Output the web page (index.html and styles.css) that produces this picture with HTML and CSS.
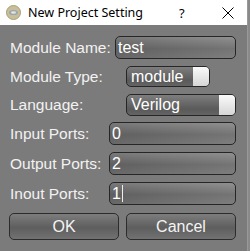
FILE: index.html
```html
<!DOCTYPE html>
<html lang="en">
<head>
  <meta charset="UTF-8">
  <title>New Project Setting</title>
  <link rel="stylesheet" href="styles.css">
</head>
<body>
  <div class="window">
    <div class="titlebar">
      <svg class="app-icon" width="15" height="15" viewBox="0 0 15 15">
        <circle cx="7.5" cy="7.5" r="7" fill="#c8bf98" stroke="#a89f78" stroke-width="1"/>
        <ellipse cx="7.5" cy="7.5" rx="4.5" ry="2.6" fill="#9aa6b8"/>
        <ellipse cx="7.5" cy="7.5" rx="2.5" ry="1.2" fill="#e8e4d6"/>
      </svg>
      <span class="title">New Project Setting</span>
      <span class="help">?</span>
      <svg class="close" width="12" height="12" viewBox="0 0 12 12">
        <path d="M0.5 0.5 L11.5 11.5 M11.5 0.5 L0.5 11.5" stroke="#000" stroke-width="1"/>
      </svg>
    </div>

    <div class="form">
      <div class="row row-name">
        <label>Module Name:</label>
        <div class="edit edit-name">test</div>
      </div>
      <div class="row row-type">
        <label>Module Type:</label>
        <div class="combo combo-type"><span>module</span><i></i></div>
      </div>
      <div class="row row-lang">
        <label>Language:</label>
        <div class="combo combo-lang"><span>Verilog</span><i></i></div>
      </div>
      <div class="row">
        <label>Input Ports:</label>
        <div class="edit edit-port">0</div>
      </div>
      <div class="row">
        <label>Output Ports:</label>
        <div class="edit edit-port">2</div>
      </div>
      <div class="row">
        <label>Inout Ports:</label>
        <div class="edit edit-port">1<b class="caret"></b></div>
      </div>
      <div class="buttons">
        <button>OK</button>
        <button>Cancel</button>
      </div>
    </div>
  </div>
</body>
</html>
```

FILE: styles.css
```css
* {
  margin: 0;
  padding: 0;
  box-sizing: border-box;
}

body {
  width: 250px;
  height: 251px;
  overflow: hidden;
  background: #8a8a8a;
  font-family: "Liberation Sans", Arial, sans-serif;
  font-size: 15.5px;
}

.window {
  width: 248px;
  height: 251px;
  background: #7b7b7b;
  border-right: 1px solid #999;
}

.titlebar {
  height: 25px;
  background: #fff;
  display: flex;
  align-items: center;
  padding-left: 6px;
  font-family: "Noto Sans", sans-serif;
  font-size: 12.5px;
  color: #000;
}

.app-icon {
  flex-shrink: 0;
}

.title {
  width: 151px;
  margin-left: 7px;
}

.help {
  width: 43px;
  font-size: 13px;
}

.close {
  flex-shrink: 0;
}

.form {
  padding: 11px 11px 0 10px;
  display: flex;
  flex-direction: column;
  gap: 7px;
  color: #f2f2f2;
}

.row {
  display: flex;
  align-items: center;
  justify-content: space-between;
  height: 23px;
}

.row-type {
  height: 21px;
}

.row-lang {
  height: 22px;
  margin-bottom: -1px;
}

.edit {
  height: 23px;
  border: 1px solid #262626;
  border-radius: 5px;
  padding-left: 2px;
  line-height: 21px;
  font-size: 16px;
  color: #fff;
  background: linear-gradient(100deg, rgba(0,0,0,0.12), rgba(255,255,255,0.06)),
              linear-gradient(to bottom, #8a8a8a, #6c6c6c 55%, #767676);
}

.edit-name {
  width: 121px;
}

.edit-port {
  width: 127px;
}

.caret {
  display: inline-block;
  width: 1px;
  height: 17px;
  background: #eee;
  vertical-align: -3px;
  margin-left: 1px;
}

.combo {
  display: flex;
  height: 100%;
  border: 1px solid #262626;
  border-radius: 5px;
  overflow: hidden;
  font-size: 16px;
  color: #fff;
  background: linear-gradient(to bottom, #7e7e7e, #5a5a5a 70%, #646464);
}

.combo span {
  flex: 1;
  padding-left: 4px;
  line-height: 19px;
}

.combo i {
  width: 16px;
  background: linear-gradient(to bottom, #fafafa, #d6d6d6);
}

.combo-type {
  width: 84px;
  margin-right: 26px;
}

.combo-lang {
  width: 110px;
}

.buttons {
  display: flex;
  justify-content: space-between;
  margin-top: 1px;
}

button {
  width: 110px;
  height: 27px;
  margin-left: -1px;
  border: 1px solid #2c2c2c;
  border-radius: 5px;
  font-family: "Liberation Sans", Arial, sans-serif;
  font-size: 16px;
  color: #f4f4f4;
  background: linear-gradient(to bottom, #7d7d7d, #5e5e5e 55%, #727272);
}
```
